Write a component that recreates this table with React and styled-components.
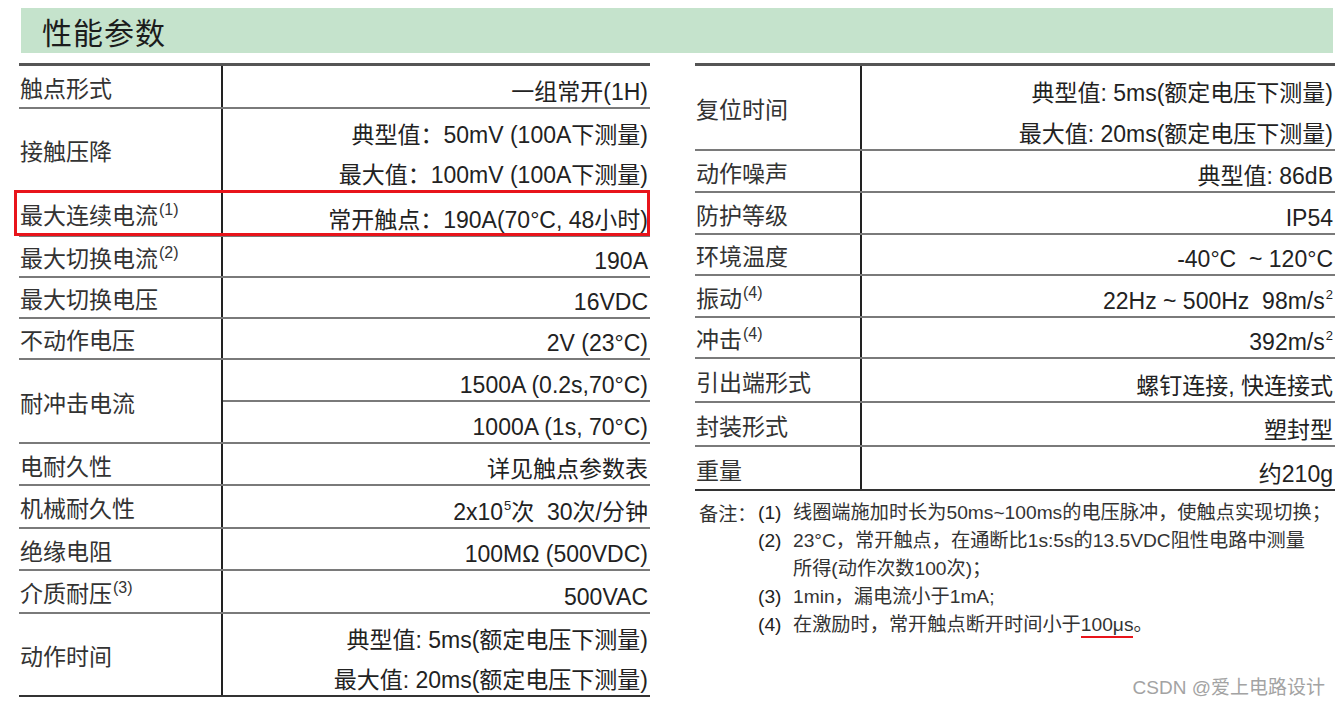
import React from 'react';
import styled, { createGlobalStyle } from 'styled-components';

const GlobalStyle = createGlobalStyle`
  html, body {
    margin: 0;
    padding: 0;
    background: #ffffff;
  }
  body {
    font-family: "Liberation Sans", "Noto Sans CJK SC", sans-serif;
    color: #222;
  }
`;

const Page = styled.div`
  position: relative;
  width: 1338px;
  height: 705px;
  box-sizing: border-box;
  padding: 8px 3px 0 19px;
  overflow: hidden;
`;

const TitleBand = styled.div`
  margin: 0 2px;
  height: 45px;
  background-color: #c5e3cc;
  display: flex;
  align-items: center;
  padding-left: 21px;
  font-family: "Noto Sans CJK SC", sans-serif;
  font-size: 30px;
  color: #1c1c1c;
  letter-spacing: 1px;
`;

const Columns = styled.div`
  display: grid;
  grid-template-columns: 631px 640px;
  column-gap: 45px;
  margin-top: 10px;
  align-items: start;
`;

const Table = styled.div`
  border-top: 3px solid #555;
`;

const Row = styled.div`
  position: relative;
  display: grid;
  grid-template-columns: ${(p) => p.$labelWidth}px 1fr;
  height: ${(p) => p.$h}px;
  box-sizing: border-box;
  border-bottom: ${(p) => (p.$last ? '2px solid #333' : '2px solid #7a7a7a')};

  ${(p) =>
    p.$highlight &&
    `
    &::after {
      content: '';
      position: absolute;
      left: -5px;
      right: 0;
      top: -2px;
      bottom: -1px;
      border: 3px solid #e8141b;
      pointer-events: none;
    }
  `}
`;

const Label = styled.div`
  display: flex;
  align-items: center;
  padding: 1px 0 0 1px;
  border-right: 2px solid #222;
  font-size: 23px;
  color: #333;
  white-space: nowrap;
`;

const Value = styled.div`
  display: flex;
  flex-direction: column;
`;

const ValueLine = styled.div`
  flex: 1;
  display: flex;
  align-items: flex-end;
  justify-content: flex-end;
  padding: 0 2px 3px 0;
  font-size: 23px;
  line-height: 1;
  color: #222;
  white-space: nowrap;
  border-bottom: ${(p) => (p.$divided ? '2px solid #7a7a7a' : 'none')};
`;

const Sup = styled.sup`
  font-size: ${(p) => (p.$small ? 13 : 16)}px;
  line-height: 0;
  vertical-align: ${(p) => (p.$small ? 10 : 9)}px;
  margin-left: 1px;
`;

const Notes = styled.div`
  display: grid;
  grid-template-columns: 59px 35px 1fr;
  grid-auto-rows: 28px;
  margin: 8px 0 0 4px;
  font-size: 19.2px;
  color: #333;
  align-items: center;
  white-space: nowrap;
`;

const NoteHead = styled.div`
  grid-column: 1;
`;

const NoteMark = styled.div`
  grid-column: 2;
  grid-row: ${(p) => p.$row};
  color: #222;
`;

const NoteText = styled.div`
  grid-column: 3;
  grid-row: ${(p) => p.$row} / span ${(p) => p.$span || 1};
  line-height: 28px;
  min-width: 0;
`;

const Marked = styled.span`
  border-bottom: 2px solid #e8141b;
  padding-bottom: 1px;
`;

const Watermark = styled.div`
  position: absolute;
  right: 13px;
  bottom: 6px;
  font-size: 19px;
  color: #a3a3a3;
`;

const leftRows = [
  { label: '触点形式', values: ['一组常开(1H)'], h: 43 },
  {
    label: '接触压降',
    values: ['典型值：50mV (100A下测量)', '最大值：100mV (100A下测量)'],
    h: 83,
  },
  {
    label: '最大连续电流',
    sup: '(1)',
    values: ['常开触点：190A(70°C, 48小时)'],
    h: 45,
    highlight: true,
  },
  { label: '最大切换电流', sup: '(2)', values: ['190A'], h: 41 },
  { label: '最大切换电压', values: ['16VDC'], h: 41 },
  { label: '不动作电压', values: ['2V (23°C)'], h: 41 },
  {
    label: '耐冲击电流',
    values: ['1500A (0.2s,70°C)', '1000A (1s, 70°C)'],
    h: 84,
    divided: true,
  },
  { label: '电耐久性', values: ['详见触点参数表'], h: 42 },
  {
    label: '机械耐久性',
    values: [
      <>
        2x10<Sup $small>5</Sup>次&nbsp;&nbsp;30次/分钟
      </>,
    ],
    h: 43,
  },
  { label: '绝缘电阻', values: ['100MΩ (500VDC)'], h: 42 },
  { label: '介质耐压', sup: '(3)', values: ['500VAC'], h: 43 },
  {
    label: '动作时间',
    values: ['典型值: 5ms(额定电压下测量)', '最大值: 20ms(额定电压下测量)'],
    h: 83,
  },
];

const rightRows = [
  {
    label: '复位时间',
    values: ['典型值: 5ms(额定电压下测量)', '最大值: 20ms(额定电压下测量)'],
    h: 85,
  },
  { label: '动作噪声', values: ['典型值: 86dB'], h: 42 },
  { label: '防护等级', values: ['IP54'], h: 42 },
  { label: '环境温度', values: ['-40°C\u00a0\u00a0~ 120°C'], h: 41 },
  {
    label: '振动',
    sup: '(4)',
    values: [
      <>
        22Hz ~ 500Hz&nbsp;&nbsp;98m/s<Sup $small>2</Sup>
      </>,
    ],
    h: 42,
  },
  {
    label: '冲击',
    sup: '(4)',
    values: [
      <>
        392m/s<Sup $small>2</Sup>
      </>,
    ],
    h: 41,
  },
  { label: '引出端形式', values: ['螺钉连接, 快连接式'], h: 44 },
  { label: '封装形式', values: ['塑封型'], h: 44 },
  { label: '重量', values: ['约210g'], h: 44 },
];

function SpecTable({ rows, labelWidth }) {
  return (
    <Table>
      {rows.map((row, i) => (
        <Row
          key={row.label}
          $labelWidth={labelWidth}
          $h={row.h}
          $last={i === rows.length - 1}
          $highlight={row.highlight}
        >
          <Label>
            <span>
              {row.label}
              {row.sup && <Sup>{row.sup}</Sup>}
            </span>
          </Label>
          <Value>
            {row.values.map((v, j) => (
              <ValueLine key={j} $divided={row.divided && j === 0}>
                <span>{v}</span>
              </ValueLine>
            ))}
          </Value>
        </Row>
      ))}
    </Table>
  );
}

export default function App() {
  return (
    <>
      <GlobalStyle />
      <Page>
        <TitleBand>性能参数</TitleBand>
        <Columns>
          <SpecTable rows={leftRows} labelWidth={204} />
          <div>
            <SpecTable rows={rightRows} labelWidth={167} />
            <Notes>
              <NoteHead>备注：</NoteHead>
              <NoteMark $row={1}>(1)</NoteMark>
              <NoteText $row={1}>线圈端施加时长为50ms~100ms的电压脉冲，使触点实现切换；</NoteText>
              <NoteMark $row={2}>(2)</NoteMark>
              <NoteText $row={2} $span={2}>
                23°C，常开触点，在通断比1s:5s的13.5VDC阻性电路中测量
                <br />
                所得(动作次数100次)；
              </NoteText>
              <NoteMark $row={4}>(3)</NoteMark>
              <NoteText $row={4}>1min，漏电流小于1mA;</NoteText>
              <NoteMark $row={5}>(4)</NoteMark>
              <NoteText $row={5}>
                在激励时，常开触点断开时间小于<Marked>100μs</Marked>。
              </NoteText>
            </Notes>
          </div>
        </Columns>
        <Watermark>CSDN @爱上电路设计</Watermark>
      </Page>
    </>
  );
}
